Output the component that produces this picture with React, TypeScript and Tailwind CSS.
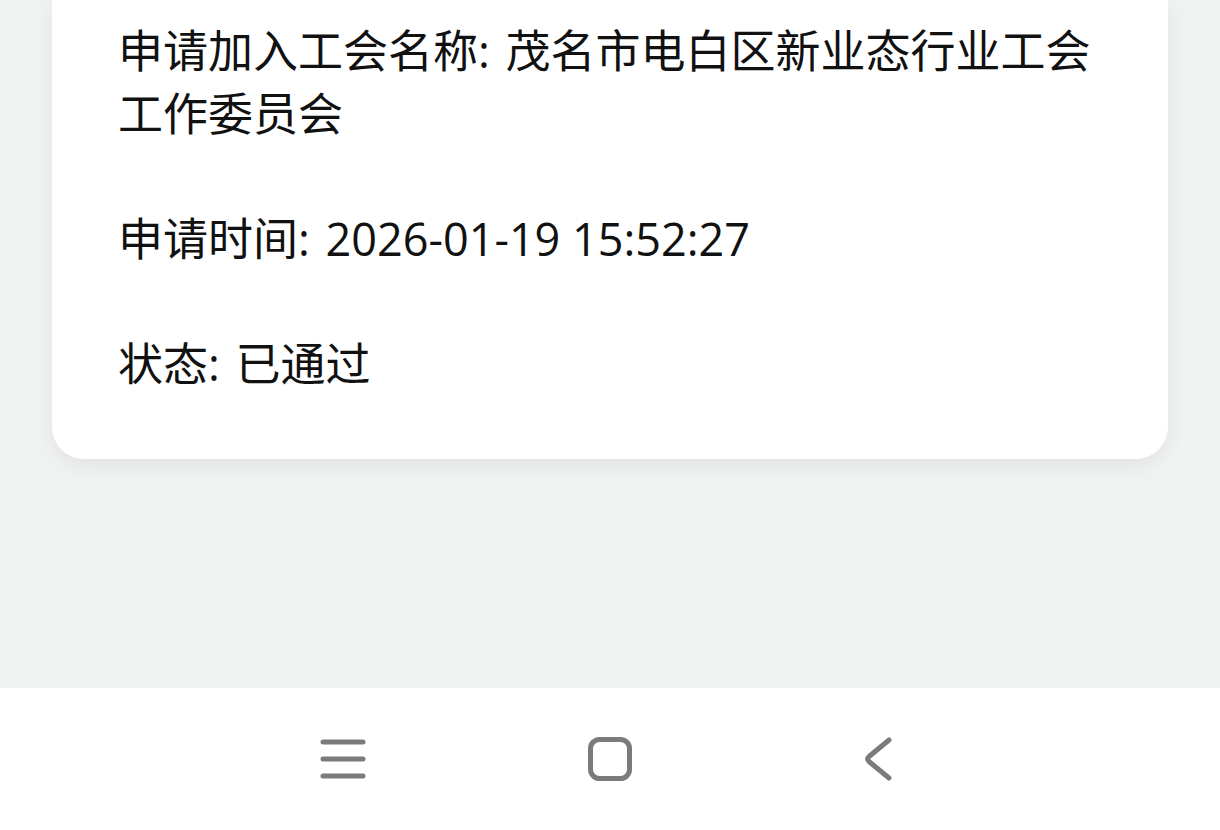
import React from "react"

const rows = [
  { label: "申请加入工会名称", value: "茂名市电白区新业态行业工会工作委员会" },
  { label: "申请时间", value: "2026-01-19 15:52:27" },
  { label: "状态", value: "已通过" },
]

function NavMenu() {
  return (
    <svg width="48" height="44" viewBox="0 0 48 44" fill="none">
      <path d="M4 5h40M4 22h40M4 39h40" stroke="#7b7b7b" strokeWidth="5" strokeLinecap="round" />
    </svg>
  )
}

function NavHome() {
  return (
    <svg width="48" height="46" viewBox="0 0 48 46" fill="none">
      <rect x="4.5" y="3.5" width="39" height="39" rx="9" stroke="#7b7b7b" strokeWidth="5" />
    </svg>
  )
}

function NavBack() {
  return (
    <svg width="34" height="46" viewBox="0 0 34 46" fill="none">
      <path d="M29 4L9 20.5Q6.5 23 9 25.5L29 42" stroke="#7b7b7b" strokeWidth="5" strokeLinecap="round" strokeLinejoin="round" />
    </svg>
  )
}

export default function App() {
  return (
    <div
      className="flex h-[830px] w-[1220px] flex-col overflow-hidden bg-[#f1f2f2] text-[#111111]"
      style={{ fontFamily: '"Open Sans", "Noto Sans CJK SC", sans-serif' }}
    >
      <div className="flex-1 px-[52px]">
        <div className="rounded-b-[32px] bg-white pt-[20px] pr-[40px] pb-[64px] pl-[66px] shadow-[0_6px_22px_rgba(0,0,0,0.07)]">
          {rows.map((row, i) => (
            <p key={i} className={`text-[45px] leading-[62.5px] ${i > 0 ? "mt-[62.5px]" : ""}`}>
              {row.label}
              <span className="mr-[4px]">:</span> {row.value}
            </p>
          ))}
        </div>
      </div>
      <div className="flex h-[142px] items-center justify-center bg-white">
        <div className="flex w-[267px] justify-center">
          <NavMenu />
        </div>
        <div className="flex w-[267px] justify-center">
          <NavHome />
        </div>
        <div className="flex w-[267px] justify-center">
          <NavBack />
        </div>
      </div>
    </div>
  )
}
